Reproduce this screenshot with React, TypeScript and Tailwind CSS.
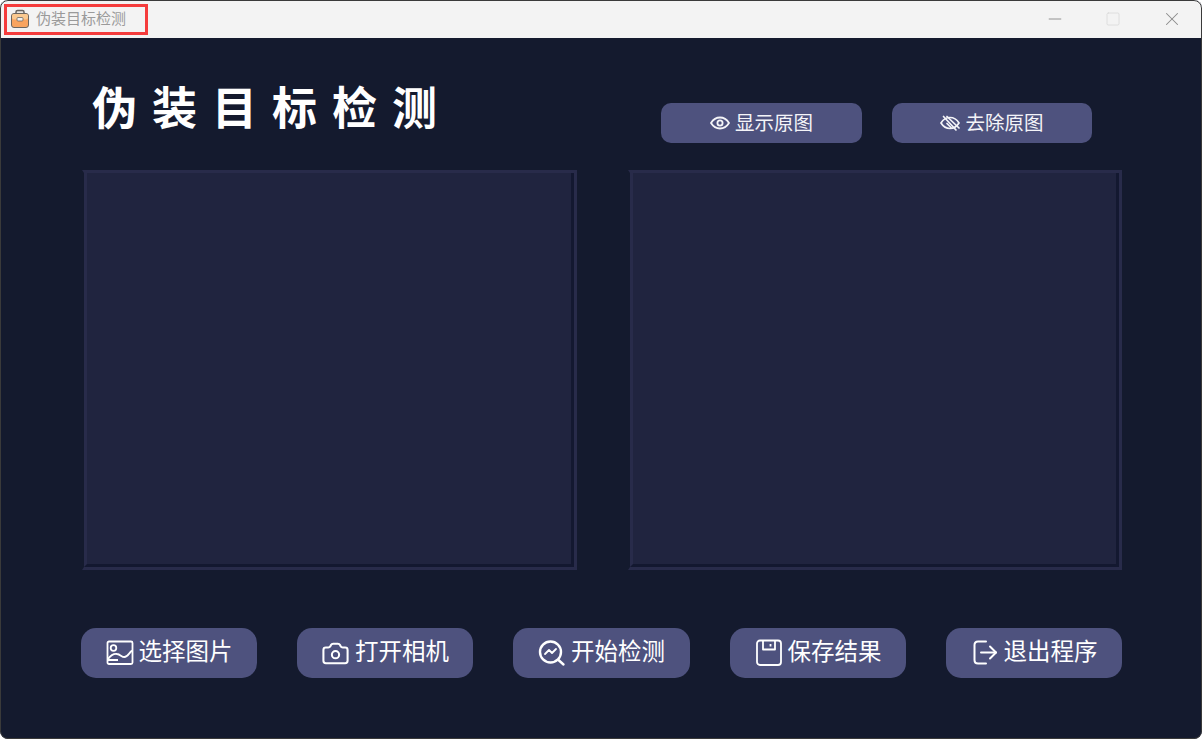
import { Camera, Minus, Square, X } from 'lucide-react';
import type { ReactNode } from 'react';

function BriefcaseLogo() {
  return (
    <svg width="20" height="20" viewBox="0 0 20 20">
      <path d="M6 5V3Q6 1.500 7.500 1.500H12.500Q14 1.500 14 3V5" fill="#e8e4de" stroke="#6b6660" strokeWidth="1.500" />
      <rect x="1.500" y="4.500" width="17" height="14" rx="2.500" fill="#f9a45f" stroke="#6b6660" />
      <rect x="2" y="5" width="16" height="5.500" rx="2" fill="#fbc98f" />
      <rect x="7" y="8.500" width="6" height="3.500" rx="1" fill="#f4f1ec" stroke="#6b6660" strokeWidth="0.800" />
    </svg>
  );
}

function EyeIcon() {
  return (
    <svg width="20" height="20" viewBox="0 0 20 20" fill="none" stroke="currentColor" strokeWidth="1.800">
      <path d="M1 10C3.500 6 6.500 4.500 10 4.500S16.500 6 19 10C16.500 14 13.500 15.500 10 15.500S3.500 14 1 10Z" />
      <circle cx="10" cy="10" r="2.600" />
    </svg>
  );
}

function EyeHatchIcon() {
  return (
    <svg width="20" height="20" viewBox="0 0 20 20" fill="none" stroke="currentColor" strokeWidth="1.700" strokeLinecap="round">
      <path d="M1 10C3.500 6 6.500 4.500 10 4.500S16.500 6 19 10C16.500 14 13.500 15.500 10 15.500S3.500 14 1 10Z" />
      <path d="M3.500 3.500L16 17" />
      <path d="M7 3.500L19 15" />
      <path d="M7 10.500L11 14.500" />
    </svg>
  );
}

function PictureIcon() {
  return (
    <svg width="28" height="28" viewBox="0 0 28 28" fill="none" stroke="currentColor" strokeWidth="1.800" strokeLinejoin="round">
      <rect x="1.500" y="2.500" width="25" height="22.500" rx="1.500" />
      <circle cx="7.500" cy="9" r="2.800" />
      <path d="M2 20C5 16 8 14.500 11 15C14.500 15.500 15.500 18 18.500 18C21.500 18 23 14 26 11.500" />
      <path d="M2 21H12" />
    </svg>
  );
}

function DetectIcon() {
  return (
    <svg width="28" height="28" viewBox="0 0 28 28" fill="none" stroke="currentColor" strokeLinecap="round" strokeLinejoin="round">
      <circle cx="12.500" cy="13" r="10.500" strokeWidth="2.400" />
      <path d="M20.500 21L25.500 25.500" strokeWidth="2.400" />
      <path d="M7 15L11 11L14 14L18 10" strokeWidth="1.800" />
    </svg>
  );
}

function FloppyIcon() {
  return (
    <svg width="28" height="28" viewBox="0 0 28 28" fill="none" stroke="currentColor" strokeWidth="1.800" strokeLinejoin="round">
      <rect x="2" y="1.500" width="24" height="24.500" rx="3" />
      <path d="M8 2V10.500H20V2" />
      <path d="M15.500 5V7.500" />
    </svg>
  );
}

function ExitIcon() {
  return (
    <svg width="28" height="28" viewBox="0 0 28 28" fill="none" stroke="currentColor" strokeWidth="2" strokeLinecap="round" strokeLinejoin="round">
      <path d="M15 2.500H7Q3.500 2.500 3.500 6V21Q3.500 24.500 7 24.500H15" />
      <path d="M10 13.500H25" />
      <path d="M19 7.500L25 13.500L19 19.500" />
    </svg>
  );
}

function ActionButton({ icon, label, width = 'w-[176px]' }: { icon: ReactNode; label: string; width?: string }) {
  return (
    <button className={`flex h-[50px] items-center justify-center gap-[5px] rounded-[15px] bg-[#4e527e] text-[23.5px] text-white ${width}`}>
      {icon}
      <span className="pb-1">{label}</span>
    </button>
  );
}

function TopButton({ icon, label, width }: { icon: ReactNode; label: string; width: string }) {
  return (
    <button className={`flex h-10 items-center justify-center gap-[5px] rounded-[10px] bg-[#4e527e] text-[19.5px] text-[#f4f4f8] ${width}`}>
      {icon}
      <span className="pb-0.5">{label}</span>
    </button>
  );
}

function Panel({ width }: { width: string }) {
  return (
    <div className={`h-[400px] border-[3px] border-l-2 border-[#282b4a] border-l-transparent bg-[#20243f] bg-clip-padding ${width}`}>
      <div className="h-full w-full border-r-[3px] border-b-[3px] border-l-[3px] border-r-[#131830] border-b-[#131830] border-l-[#282b4a]" />
    </div>
  );
}

export default function App() {
  return (
    <div className="relative flex h-[739px] w-[1202px] flex-col overflow-hidden rounded-lg bg-[#141a2e] font-['Noto_Sans_CJK_SC','Noto_Sans_CJK_JP',sans-serif]">
      <header className="flex h-[38px] shrink-0 items-center justify-between bg-[#f3f3f3] pl-[10px]">
        <div className="flex items-center gap-[6px] text-[15px] text-[#9a9a9a]">
          <BriefcaseLogo />
          <span className="pb-0.5">伪装目标检测</span>
        </div>
        <div className="flex items-center text-[#8a8a8a]">
          <div className="flex w-[58px] justify-center">
            <Minus size={20} strokeWidth={1.1} />
          </div>
          <div className="flex w-[58px] justify-center text-[#d8d8d8]">
            <Square size={16} strokeWidth={1.2} />
          </div>
          <div className="flex w-[60px] justify-center">
            <X size={22} strokeWidth={1.1} />
          </div>
        </div>
      </header>

      <main className="flex flex-1 flex-col pr-[80px] pl-[81px]">
        <div className="flex h-[132px] items-start">
          <h1 className="mt-[37px] ml-[11px] text-[45px] leading-[62px] font-bold tracking-[15px] text-white">伪装目标检测</h1>
          <div className="mt-[65px] ml-auto flex gap-[30px] pr-[30px]">
            <TopButton icon={<EyeIcon />} label="显示原图" width="w-[201px]" />
            <TopButton icon={<EyeHatchIcon />} label="去除原图" width="w-[200px]" />
          </div>
        </div>

        <div className="flex justify-between pl-px">
          <Panel width="w-[495px]" />
          <Panel width="w-[494px]" />
        </div>

        <div className="mt-[58px] flex justify-between">
          <ActionButton icon={<PictureIcon />} label="选择图片" />
          <ActionButton icon={<Camera size={29} strokeWidth={1.7} />} label="打开相机" />
          <ActionButton icon={<DetectIcon />} label="开始检测" width="w-[177px]" />
          <ActionButton icon={<FloppyIcon />} label="保存结果" />
          <ActionButton icon={<ExitIcon />} label="退出程序" />
        </div>
      </main>

      {/* window edge */}
      <div className="pointer-events-none absolute inset-0 rounded-lg border border-[#3a3a3a]" />
      {/* red annotation box from the screenshot */}
      <div className="absolute top-[4px] left-[4px] h-[31px] w-[144px] border-[3px] border-[#f53c3c]" />
    </div>
  );
}
